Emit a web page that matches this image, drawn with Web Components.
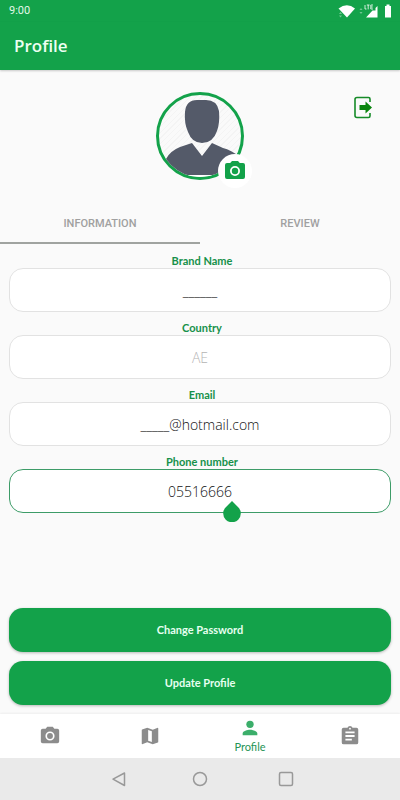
<!DOCTYPE html>
<html lang="en">
<head>
<meta charset="utf-8">
<meta name="viewport" content="width=device-width, initial-scale=1">
<title>Profile</title>
<style>
  :root { --green: #13a24a; --green-text: #16914a; --page: #fafafa; --grey: #8c8c8c; }
  body { margin: 0; background: var(--page); font-family: Lato, "Open Sans", "Noto Sans", sans-serif; }
</style>
</head>
<body>
<profile-page></profile-page>
<script>
const define = (name, html, setup) => {
  const template = document.createElement('template');
  template.innerHTML = '<style>*{box-sizing:border-box}svg{display:block}button,input{font:inherit}button{border:0;background:none;padding:0;cursor:pointer}</style>' + html;
  customElements.define(name, class extends HTMLElement {
    constructor() {
      super();
      this.attachShadow({ mode: 'open' }).append(template.content.cloneNode(true));
    }
    connectedCallback() { if (setup) setup(this, this.shadowRoot); }
  });
};
const camera = '<path d="M9 2 7.2 4H4a2 2 0 0 0-2 2v12a2 2 0 0 0 2 2h16a2 2 0 0 0 2-2V6a2 2 0 0 0-2-2h-3.200L15 2zm3 15a5 5 0 1 1 0-10 5 5 0 0 1 0 10z" fill-rule="evenodd"/><circle cx="12" cy="12" r="3.200"/>';

define('status-bar', `
<style>
  :host { display: flex; align-items: center; justify-content: space-between; height: 22px; padding: 0 9px; background: var(--green); color: #e2f8e8; font-family: Roboto, sans-serif; font-size: 11px; line-height: 22px; }
  .icons { display: flex; }
</style>
<span>9:00</span>
<div class="icons">
  <svg width="54" height="16" viewBox="0 0 54 16" fill="#fff" aria-hidden="true">
    <path d="M1.500 5.500Q10 -1 18 5.500L10 14.500Z"/>
    <path d="M2 11l1.500-2L5 11zM2 12.500l1.500 2 1.500-2zM22.500 7l1.500-2 1.500 2zM22.500 9l1.500 2 1.500-2z" opacity=".4"/>
    <path d="M40.500 3v11.500H29l6.500-7h3V5z"/>
    <path d="M28 2v4h1.500M29.800 2h2.700M31.200 2v4.400M36 2h-2.200v4h2.200M34 4h1.800" fill="none" stroke="#fff" stroke-width=".8"/>
    <path d="M48 3h1.500V1.500h3V3H54v11.500h-6z"/>
  </svg>
</div>`);

define('app-header', `
<style>
  :host { display: flex; align-items: center; height: 48px; padding: 0 14px; background: var(--green); color: #edfff2; box-shadow: 0 1px 2px #0003; font-family: "Open Sans", sans-serif; }
  h1 { margin: 0; font-size: 17px; line-height: 24px; font-weight: 600; }
</style>
<h1><slot></slot></h1>`);

define('profile-avatar', `
<style>
  :host { display: block; position: relative; width: 88px; height: 88px; }
  .photo { border: 3px solid var(--green); border-radius: 50%; overflow: hidden; background: repeating-linear-gradient(135deg, #fafafa 0 3px, #f4f4f4 3px 4px); }
  button { position: absolute; right: -8px; bottom: -8px; width: 34px; height: 34px; border-radius: 50%; background: #fff; display: grid; place-items: center; color: var(--green); }
</style>
<div class="photo"><svg width="82" height="82" viewBox="0 0 82 82" role="img" aria-label="Profile picture">
  <path d="M26 17Q27 5 38 5h9q11 0 13 11 1 12-2 20-4 12-15 12-10 0-14-11-4-9-3-20z" fill="#545a69"/>
  <path d="M33 48 21 52Q11 56 7 64L-1 82v-2h82V62Q72 55 64 53L53 48 43 61z" fill="#545a69"/>
  <path d="M20 80h60v2H20z" fill="#fff"/>
</svg></div>
<button aria-label="Change picture"><svg width="24" height="24" viewBox="0 0 24 24" fill="currentColor">${camera}</svg></button>`);

define('profile-summary', `
<style>
  :host { display: grid; grid-template-columns: 1fr auto 1fr; align-items: start; padding: 22px 27px 25px; }
  profile-avatar { grid-column: 2; }
  button { justify-self: end; margin-top: 4px; }
</style>
<profile-avatar></profile-avatar>
<button aria-label="Log out"><svg width="20" height="24" viewBox="0 0 20 24" fill="none">
  <path d="M17 6V3q0-1.500-1.500-1.500H4Q2 1.500 2 3.500v16Q2 21.500 4 21.500h11.500Q17 21.500 17 20v-3" stroke="#168b28" stroke-width="1.600"/>
  <path d="M6.500 9h6V5.500L19 11.500l-6.500 6V14h-6z" fill="#0a850e"/>
</svg></button>`);

define('tab-strip', `
<style>
  :host { display: grid; grid-template-columns: 1fr 1fr; font-family: Roboto, sans-serif; }
  button { height: 39px; border-bottom: 2px solid transparent; color: #a0a0a0; font-size: 11px; line-height: 16px; font-weight: 500; }
  button[aria-selected=true] { border-color: #a0a3a0; }
</style>
<button role="tab" aria-selected="true">INFORMATION</button>
<button role="tab" aria-selected="false">REVIEW</button>`,
(host, root) => {
  host.setAttribute('role', 'tablist');
  const tabs = root.querySelectorAll('button');
  tabs.forEach(t => t.onclick = () => tabs.forEach(o => o.setAttribute('aria-selected', o === t)));
});

define('profile-field', `
<style>
  :host { display: block; }
  label { display: block; height: 23px; padding: 8px 0 0 4px; text-align: center; font-size: 11px; line-height: 16px; font-weight: 700; color: var(--green-text); }
  .box { position: relative; }
  input { display: block; width: 100%; height: 44px; margin: 0; padding: 0 12px; border: 1px solid #e2e2e2; border-radius: 14px; background: #fff; text-align: center; font-family: "Open Sans", sans-serif; font-size: 14px; font-weight: 300; color: #111; outline: 0; }
  input:disabled { color: #b4b4b4; }
  :host([active]) input { border-color: #3d9c68; }
  .handle { display: none; position: absolute; left: calc(50% + 22px); top: 31px; }
  :host([active]) .handle { display: block; }
</style>
<label for="value"></label>
<div class="box"><input id="value">
<svg class="handle" width="20" height="22" viewBox="0 0 20 22" fill="#13a24a" aria-hidden="true"><path d="M10 1l6.200 6.200a8.800 8.800 0 1 1-12.400 0z"/></svg></div>`,
(host, root) => {
  root.querySelector('label').textContent = host.getAttribute('label');
  const input = root.querySelector('input');
  input.type = host.getAttribute('type') || 'text';
  input.value = host.getAttribute('value');
  input.disabled = host.hasAttribute('disabled');
});

define('action-button', `
<style>
  :host { display: block; }
  button { width: 100%; height: 44px; border-radius: 14px; background: var(--green); color: #e6fff0; font-size: 11px; line-height: 16px; font-weight: 700; box-shadow: 0 1px 3px #0004; }
</style>
<button><slot></slot></button>`);

define('nav-item', `
<style>
  :host { display: grid; }
  a { display: flex; flex-direction: column; align-items: center; justify-content: center; color: var(--grey); text-decoration: none; font-size: 11px; line-height: 16px; }
  :host([current]) a { color: #259455; }
  :host([current]) ::slotted(svg) { color: #3bae6a; }
</style>
<a href="#"><slot></slot></a>`,
(host, root) => root.querySelector('a').setAttribute('aria-label', host.getAttribute('name')));

define('bottom-nav', `
<style>
  :host { display: grid; grid-template-columns: repeat(4, 1fr); height: 44px; background: #fff; box-shadow: 0 -1px 2px #0000000d; }
</style>
<nav-item name="Camera"><svg width="22" height="22" viewBox="0 0 24 24" fill="currentColor">${camera}</svg></nav-item>
<nav-item name="Map"><svg width="22" height="22" viewBox="0 0 24 24" fill="currentColor"><path fill-rule="evenodd" d="M20.500 3 15 5.100 9 3 3.400 4.900Q3 5 3 5.400v15.100q0 .5.500.5L9 18.900l6 2.100 5.600-1.900q.4-.1.400-.5V3.500q0-.5-.5-.5zM10 5.500l4 1.400v11.600l-4-1.400z"/></svg></nav-item>
<nav-item name="Profile" current><svg width="22" height="22" viewBox="0 0 24 24" fill="currentColor"><circle cx="12" cy="8" r="4"/><path d="M12 14c-2.700 0-8 1.300-8 4v2h16v-2c0-2.700-5.300-4-8-4z"/></svg><span>Profile</span></nav-item>
<nav-item name="Orders"><svg width="22" height="22" viewBox="0 0 24 24" fill="currentColor"><path fill-rule="evenodd" d="M19 3h-4.200a3 3 0 0 0-5.600 0H5a2 2 0 0 0-2 2v14a2 2 0 0 0 2 2h14a2 2 0 0 0 2-2V5a2 2 0 0 0-2-2zm-7 0a1 1 0 1 1 0 2 1 1 0 0 1 0-2zm2 14H7v-2h7zm3-4H7v-2h10zm0-4H7V7h10z"/></svg></nav-item>`);

define('system-nav', `
<style>
  :host { display: flex; justify-content: center; align-items: center; gap: 60px; height: 42px; background: #eaeaea; }
  svg { fill: none; stroke: #999; stroke-width: 1.500; stroke-linejoin: round; }
</style>
<button aria-label="Back"><svg width="26" height="20" viewBox="0 0 26 20"><path d="M23.500 4v12.500L12 10.200z"/></svg></button>
<button aria-label="Home"><svg width="26" height="20" viewBox="0 0 26 20"><circle cx="13" cy="10" r="6.500"/></svg></button>
<button aria-label="Recent apps"><svg width="26" height="20" viewBox="0 0 26 20"><rect x="6.500" y="3.500" width="13" height="13" rx="1.500"/></svg></button>`);

define('profile-page', `
<style>
  :host { display: flex; flex-direction: column; min-height: 100vh; }
  main { flex: 1; display: flex; flex-direction: column; }
  form { flex: 1; display: flex; flex-direction: column; padding: 1px 9px 9px; }
  .actions { margin-top: auto; padding-top: 24px; display: grid; gap: 9px; }
</style>
<status-bar></status-bar>
<app-header>Profile</app-header>
<main>
  <profile-summary></profile-summary>
  <tab-strip></tab-strip>
  <form>
    <profile-field label="Brand Name" value="______"></profile-field>
    <profile-field label="Country" value="AE" disabled></profile-field>
    <profile-field label="Email" type="email" value="_____@hotmail.com"></profile-field>
    <profile-field label="Phone number" type="tel" value="05516666" active></profile-field>
    <div class="actions">
      <action-button>Change Password</action-button>
      <action-button>Update Profile</action-button>
    </div>
  </form>
</main>
<bottom-nav></bottom-nav>
<system-nav></system-nav>`);
</script>
</body>
</html>
